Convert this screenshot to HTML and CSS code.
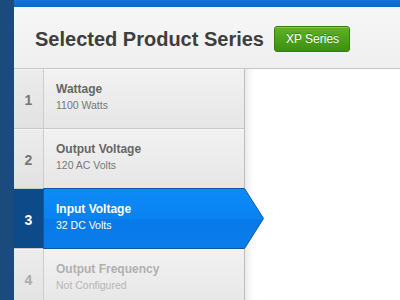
FILE: index.html
```html
<!DOCTYPE html>
<html>
<head>
<meta charset="utf-8">
<link rel="stylesheet" href="styles.css">
</head>
<body>
<div class="app">
  <div class="rail"></div>
  <div class="main">
    <div class="topbar"></div>
    <div class="header">
      <h1 class="title">Selected Product Series</h1>
      <span class="badge">XP Series</span>
    </div>
    <div class="body">
      <ul class="steps">
        <li class="step">
          <div class="num">1</div>
          <div class="info"><div class="name">Wattage</div><div class="value">1100 Watts</div></div>
        </li>
        <li class="step">
          <div class="num">2</div>
          <div class="info"><div class="name">Output Voltage</div><div class="value">120 AC Volts</div></div>
        </li>
        <li class="step active">
          <div class="num">3</div>
          <div class="info">
            <svg class="arrow" width="222" height="61" viewBox="0 0 222 61">
              <defs>
                <linearGradient id="ag" x1="0" y1="0" x2="0" y2="1">
                  <stop offset="0" stop-color="#0d8bf7"/>
                  <stop offset="0.5" stop-color="#0a82f1"/>
                  <stop offset="0.52" stop-color="#0779e8"/>
                  <stop offset="1" stop-color="#0a7deb"/>
                </linearGradient>
              </defs>
              <polygon points="0.5,0.5 201.5,0.5 220.5,30.5 201.5,60.5 0.5,60.5" fill="url(#ag)" stroke="#0b58a8" stroke-width="1"/>
            </svg>
            <div class="name">Input Voltage</div><div class="value">32 DC Volts</div>
          </div>
        </li>
        <li class="step disabled">
          <div class="num">4</div>
          <div class="info"><div class="name">Output Frequency</div><div class="value">Not Configured</div></div>
        </li>
      </ul>
      <div class="content"></div>
    </div>
  </div>
</div>
</body>
</html>
```
FILE: styles.css
```css
html, body {
  margin: 0;
  padding: 0;
  width: 400px;
  height: 300px;
  overflow: hidden;
  background: #fff;
  font-family: "Liberation Sans", Arial, sans-serif;
}
.app {
  display: flex;
  width: 400px;
  height: 300px;
}
.rail {
  width: 14px;
  flex: none;
  background: #1a4b7c;
}
.main {
  flex: 1;
  display: flex;
  flex-direction: column;
  min-width: 0;
}
.topbar {
  height: 7px;
  flex: none;
  background: linear-gradient(#0f74dc, #0a68cf);
}
.header {
  height: 61px;
  flex: none;
  display: flex;
  align-items: center;
  padding-left: 21px;
  background: linear-gradient(#f7f7f7, #efefef);
  border-bottom: 1px solid #c6c6c6;
}
.title {
  margin: 0;
  font-size: 20px;
  line-height: 24px;
  font-weight: bold;
  color: #3e3e3e;
  margin-top: 2px;
}
.badge {
  margin-left: 10px;
  margin-top: 2px;
  height: 24px;
  line-height: 24px;
  padding: 0 10px 0 11px;
  font-size: 12px;
  color: #fff;
  border: 1px solid #327f0c;
  border-radius: 3px;
  background: linear-gradient(#5db324, #3f8f10);
  text-shadow: 0 -1px 0 rgba(0,0,0,0.3);
  box-shadow: inset 0 1px 0 rgba(255,255,255,0.25);
}
.body {
  flex: 1;
  display: flex;
  min-height: 0;
}
.steps {
  list-style: none;
  margin: 0;
  padding: 0;
  width: 230px;
  flex: none;
  border-right: 1px solid #bdbdbd;
  background: #e9e9e9;
  position: relative;
  z-index: 1;
}
.step {
  display: flex;
  height: 59px;
  border-bottom: 1px solid #c9c9c9;
  position: relative;
}
.num {
  width: 30px;
  flex: none;
  border-right: 1px solid #cdcdcd;
  background: linear-gradient(#ececec, #e2e2e2);
  box-shadow: inset 0 1px 0 #f6f6f6;
  text-align: center;
  font-size: 14px;
  font-weight: bold;
  line-height: 16px;
  padding-top: 23px;
  box-sizing: border-box;
  color: #767676;
}
.info {
  flex: 1;
  padding: 13px 0 0 12px;
  background: linear-gradient(#f2f2f2, #e6e6e6);
  box-shadow: inset 0 1px 0 #f9f9f9;
  position: relative;
}
.name {
  font-size: 12px;
  line-height: 14px;
  font-weight: bold;
  color: #666;
  position: relative;
  white-space: nowrap;
}
.value {
  font-size: 10.5px;
  line-height: 13px;
  margin-top: 3px;
  color: #777;
  position: relative;
  white-space: nowrap;
}
.active .num {
  background: #0c4a8a;
  border-right-color: #083a70;
  box-shadow: none;
  color: #fff;
}
.active .info {
  background: transparent;
  box-shadow: none;
}
.active .arrow {
  position: absolute;
  left: -1px;
  top: -1px;
}
.active .name,
.active .value {
  color: #fff;
}
.disabled .num {
  color: #ababab;
}
.disabled .name {
  color: #b0b0b0;
}
.disabled .value {
  color: #b6b6b6;
}
.content {
  flex: 1;
  background: #fff;
  box-shadow: inset 8px 0 8px -6px rgba(0,0,0,0.12);
}
```
